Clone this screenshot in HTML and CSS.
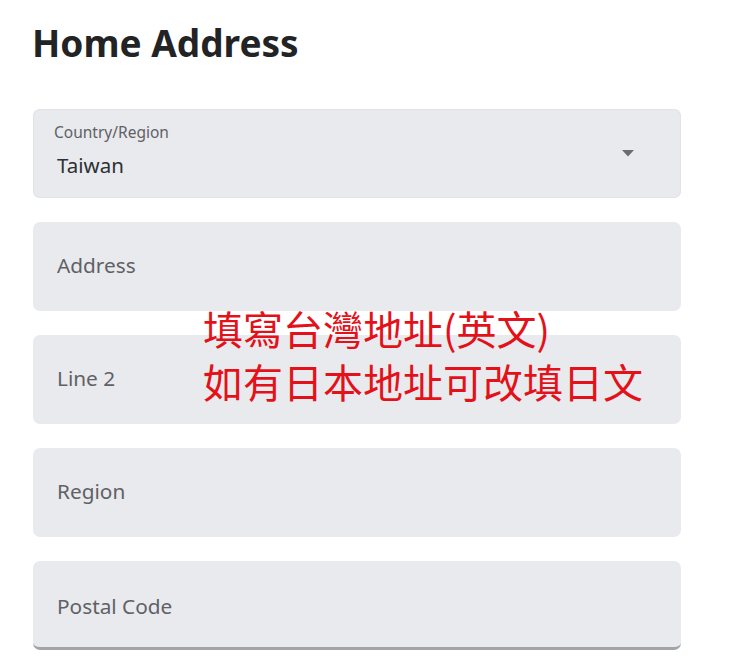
FILE: index.html
```html
<!DOCTYPE html>
<html lang="zh-Hant">
<head>
<meta charset="utf-8">
<title>Home Address</title>
<link rel="stylesheet" href="styles.css">
</head>
<body>
<main class="page">
  <h1 class="title">Home Address</h1>
  <div class="fields">
    <div class="field select">
      <div class="select-text">
        <span class="small-label">Country/Region</span>
        <span class="value">Taiwan</span>
      </div>
      <svg class="caret" width="14" height="8" viewBox="0 0 14 8"><path d="M1 1h12L7 7.5z" fill="#6b6d72"/></svg>
    </div>
    <div class="field"><span class="placeholder">Address</span></div>
    <div class="field"><span class="placeholder">Line 2</span></div>
    <div class="field"><span class="placeholder">Region</span></div>
    <div class="field underlined"><span class="placeholder">Postal Code</span></div>
  </div>
  <div class="note">填寫台灣地址(英文)<br>如有日本地址可改填日文</div>
</main>
</body>
</html>
```

FILE: styles.css
```css
html, body {
  margin: 0;
  padding: 0;
  background: #ffffff;
}
body {
  font-family: "Noto Sans", "Open Sans", "Liberation Sans", sans-serif;
}
.page {
  position: relative;
  padding: 18px 0 0 33px;
  width: 648px;
}
.title {
  margin: 0 0 0 -1px;
  font-size: 37px;
  line-height: 50px;
  font-weight: 700;
  color: #222325;
}
.fields {
  margin-top: 41px;
  display: flex;
  flex-direction: column;
  gap: 24px;
}
.field {
  box-sizing: border-box;
  height: 89px;
  background: #e9eaed;
  border-radius: 7px;
  display: flex;
  align-items: center;
  padding: 0 24px 3px;
}
.field.select {
  justify-content: space-between;
  padding: 0 46px 0 21px;
  box-shadow: inset 0 0 0 1px #e2e3e6;
}
.select-text {
  display: flex;
  flex-direction: column;
}
.small-label {
  font-size: 15.5px;
  line-height: 20px;
  color: #5f6166;
  margin-top: -6px;
}
.value {
  font-size: 20.5px;
  line-height: 28px;
  color: #2e3033;
  margin-top: 9px;
  padding-left: 3px;
}
.caret {
  display: block;
  margin-top: -2px;
}
.placeholder {
  font-size: 20.8px;
  line-height: 28px;
  color: #5f6166;
}
.field.underlined {
  border-bottom: 3px solid #a3a4a7;
  padding-top: 3px;
  padding-bottom: 0;
}
.note {
  position: absolute;
  left: 203px;
  top: 302px;
  font-family: "Noto Sans CJK TC", "Noto Sans CJK SC", sans-serif;
  font-size: 40px;
  line-height: 53px;
  color: #e31119;
  white-space: nowrap;
}
```
